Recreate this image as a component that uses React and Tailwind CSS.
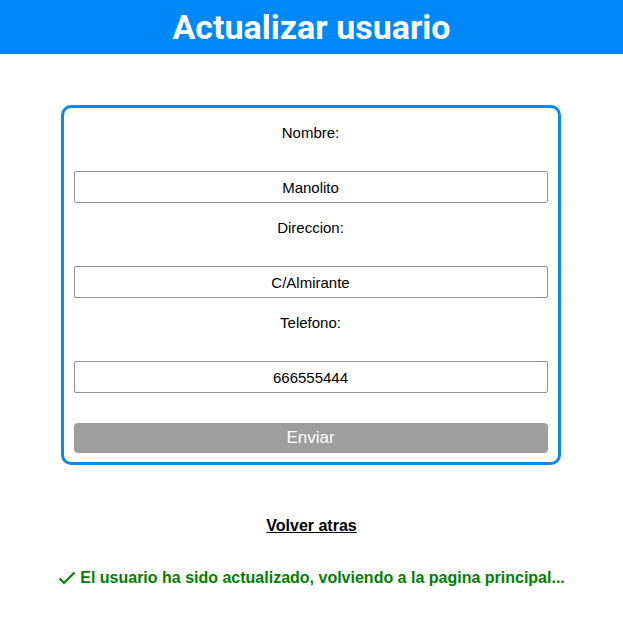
import React from "react";

function Field({ label, value }) {
  return (
    <div className="flex flex-col items-center">
      <label className="h-[18px] leading-[18px] text-[15px] text-black">{label}</label>
      <input
        readOnly
        value={value}
        className="mt-[29px] h-[32px] w-full border border-[#8f8f9d] rounded-[2px] text-center text-[15px] text-black bg-white outline-none"
        style={{ fontFamily: '"Liberation Sans", Arial, sans-serif' }}
      />
    </div>
  );
}

export default function App() {
  return (
    <div className="min-h-[628px] bg-white" style={{ fontFamily: '"Liberation Sans", Arial, sans-serif' }}>
      <header className="h-[54px] bg-[#0088f8] flex items-center justify-center">
        <h1 className="text-white font-bold text-[34px] leading-none" style={{ fontFamily: 'Roboto, "Liberation Sans", sans-serif' }}>
          Actualizar usuario
        </h1>
      </header>
      <div className="flex justify-center mt-[51px] pr-[2px]">
        <form className="w-[500px] border-[3px] border-[#0b88ee] rounded-[10px] px-[10px] pt-[16px] pb-[9px] flex flex-col gap-[16px]">
          <Field label="Nombre:" value="Manolito" />
          <Field label="Direccion:" value="C/Almirante" />
          <Field label="Telefono:" value="666555444" />
          <button
            type="button"
            className="mt-[14px] h-[30px] w-full bg-[#9e9e9e] rounded-[4px] text-white text-[17px]"
          >
            Enviar
          </button>
        </form>
      </div>
      <div className="flex justify-center mt-[52px]">
        <a href="#" className="font-bold text-[16px] text-black underline leading-[18px]">Volver atras</a>
      </div>
      <div className="flex justify-center items-center mt-[31px] gap-[4px] text-[#008000] font-bold text-[16px]">
        <svg width="18" height="14" viewBox="0 0 18 14" fill="none">
          <path d="M1.5 7.5 L6 12 L16.5 1.5" stroke="#008000" strokeWidth="2.2" />
        </svg>
        <span>El usuario ha sido actualizado, volviendo a la pagina principal...</span>
      </div>
    </div>
  );
}
